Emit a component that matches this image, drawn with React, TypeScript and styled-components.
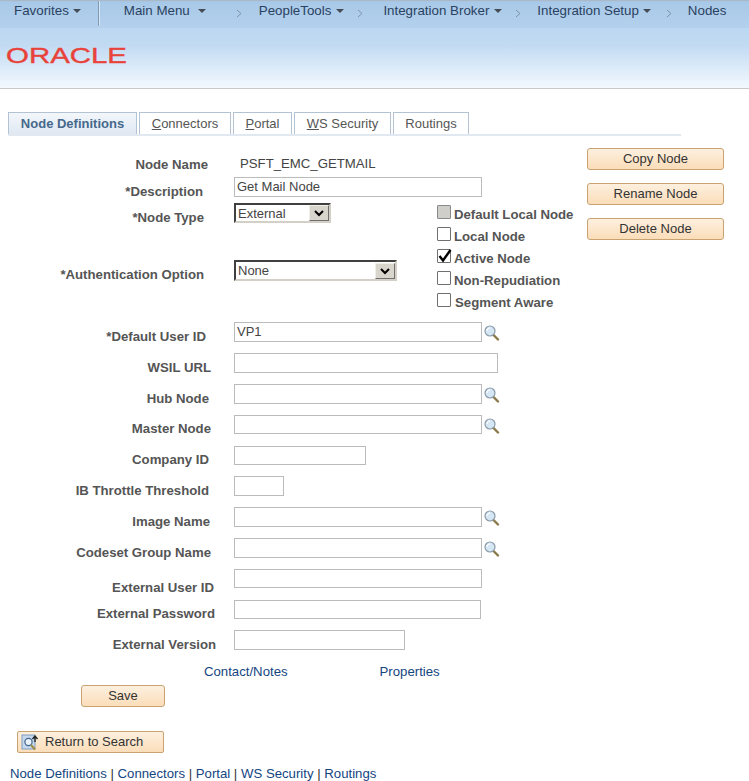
import styled, { createGlobalStyle } from 'styled-components'

const GlobalStyle = createGlobalStyle`
  html, body {
    margin: 0;
    padding: 0;
    background: #fff;
    overflow: hidden;
  }
  body {
    font-family: "Liberation Sans", Arial, sans-serif;
    font-size: 13.2px;
    color: #333;
  }
  * { box-sizing: border-box; }
`

const Page = styled.div`
  width: 749px;
  height: 781px;
  overflow: hidden;
`

const NavBar = styled.nav`
  height: 28px;
  display: flex;
  align-items: flex-start;
  padding-top: 1px;
  font-size: 13.33px;
  line-height: 17px;
  color: #2a4160;
  white-space: nowrap;
  background: linear-gradient(#a6c5e3 0, #a9c9e8 2px, #b3d1ed 100%);
  border-top: 1px solid #a9b9c9;
`

const NavLabel = styled.span<{ $left: number }>`
  margin-left: ${(p) => p.$left}px;
`

const NavMenu = styled.span<{ $left?: number }>`
  width: 0;
  height: 0;
  margin: 7px 0 0 ${(p) => p.$left ?? 4}px;
  border-left: 4px solid transparent;
  border-right: 4px solid transparent;
  border-top: 4px solid #454c55;
`

const NavDivider = styled.span`
  width: 2px;
  height: 25px;
  margin: -1px 0 0 17px;
  background: linear-gradient(90deg, #7e9cb8 50%, #d8e7f5 50%);
`

const NavChevron = styled.svg<{ $left: number }>`
  margin: 7px 0 0 ${(p) => p.$left}px;
  flex: none;
`

const Banner = styled.header`
  height: 61px;
  padding: 18px 0 0 6px;
  background: linear-gradient(#bcd7f1 0, #c2dbf3 30%, #f3f8fe 100%);
  border-bottom: 1px solid #c9c9c9;
`

const LogoMark = styled.svg`
  display: block;
`

const TabStrip = styled.div`
  width: 673px;
  height: 24px;
  margin: 23px 0 0 8px;
  display: flex;
  gap: 2px;
  border-bottom: 2px solid #e2e8f0;
`

const Tab = styled.div<{ $width: number; $active?: boolean }>`
  width: ${(p) => p.$width}px;
  height: 22px;
  text-align: center;
  line-height: 21px;
  border: 1px solid #b3c3d3;
  border-bottom: none;
  color: ${(p) => (p.$active ? '#45688c' : '#555')};
  font-size: 13px;
  font-weight: ${(p) => (p.$active ? 700 : 400)};
  background: ${(p) => (p.$active ? 'linear-gradient(#f3f7fb, #dfe8f2)' : '#fff')};
  u { text-underline-offset: 1px; }
`

const TopSection = styled.section`
  display: flex;
  margin-top: 12px;
`

const LeftColumn = styled.div`
  width: 437px;
  padding-top: 8px;
`

const FieldRow = styled.div<{ $gap?: number; $height?: number }>`
  display: grid;
  grid-template-columns: 234px 1fr;
  margin-top: ${(p) => p.$gap ?? 11}px;
  height: ${(p) => p.$height ?? 20}px;
`

const FieldLabel = styled.label<{ $right: number; $top?: number }>`
  text-align: right;
  padding-right: ${(p) => p.$right}px;
  padding-top: ${(p) => p.$top ?? 7}px;
  font-weight: 700;
  line-height: 15px;
  color: #555;
  white-space: nowrap;
`

const StaticValue = styled.span`
  padding-left: 6px;
  line-height: 16px;
  color: #444;
`

const InputCell = styled.div`
  display: flex;
  align-items: flex-start;
`

const TextInput = styled.input<{ $width: number; $height?: number }>`
  width: ${(p) => p.$width}px;
  height: ${(p) => p.$height ?? 20}px;
  padding: 0 0 2px 2px;
  border: 1px solid #bbb;
  background: #fff;
  font: 13px "Liberation Sans", Arial, sans-serif;
  color: #444;
  outline: none;
`

const LookupIcon = styled.svg`
  flex: none;
  margin: 2px 0 0 1px;
`

const SelectBox = styled.div<{ $width: number; $height: number }>`
  width: ${(p) => p.$width}px;
  height: ${(p) => p.$height}px;
  display: flex;
  align-items: center;
  justify-content: space-between;
  padding: 0 0 0 2px;
  border-top: 2px solid #404040;
  border-left: 2px solid #404040;
  border-right: 2px solid #d4d0c8;
  border-bottom: 2px solid #d4d0c8;
  font-size: 13px;
  color: #444;
  line-height: 15px;
`

const SelectArrow = styled.span`
  width: 20px;
  height: 16px;
  display: flex;
  align-items: center;
  justify-content: center;
  background: #d8d5cd;
  border: 1px solid;
  border-color: #efeee9 #6f6f6f #6f6f6f #efeee9;
`

const CheckColumn = styled.div`
  width: 150px;
  padding-top: 57px;
  display: flex;
  flex-direction: column;
  gap: 8px;
`

const CheckRow = styled.div<{ $gap?: number }>`
  height: 14px;
  display: flex;
  align-items: center;
  gap: ${(p) => p.$gap ?? 3}px;
  font-weight: 700;
  color: #555;
  white-space: nowrap;
`

const CheckText = styled.span`
  padding-top: 4px;
`

const CheckBox = styled.span<{ $disabled?: boolean }>`
  position: relative;
  width: 14px;
  height: 14px;
  flex: none;
  border: 1px solid ${(p) => (p.$disabled ? '#8a8a8a' : '#707070')};
  border-radius: 1px;
  background: ${(p) => (p.$disabled ? '#d0cec9' : '#fff')};
`

const CheckTick = styled.svg`
  position: absolute;
  left: 0;
  top: -1px;
`

const ButtonColumn = styled.div`
  width: 137px;
  display: flex;
  flex-direction: column;
  gap: 13px;
`

const ActionButton = styled.button<{ $width?: number }>`
  width: ${(p) => (p.$width ? `${p.$width}px` : '100%')};
  height: 22px;
  padding: 0 0 1px;
  border: 1px solid #c9a272;
  border-radius: 3px;
  background: linear-gradient(#fdf0df, #fbddb9);
  font: 13px "Liberation Sans", Arial, sans-serif;
  color: #333;
`

const FieldList = styled.section`
  margin-top: 15px;
`

const LinkRow = styled.div`
  display: flex;
  margin: 14px 0 0 204px;
  gap: 92px;
  line-height: 16px;
`

const PageLink = styled.a`
  color: #14457f;
  text-decoration: none;
`

const SaveWrap = styled.div`
  margin: 5px 0 0 81px;
`

const ReturnButton = styled.button`
  display: flex;
  align-items: center;
  gap: 4px;
  width: 147px;
  height: 22px;
  margin: 24px 0 0 17px;
  padding: 0 0 1px 3px;
  border: 1px solid #c9a272;
  border-radius: 2px;
  background: linear-gradient(#fdf0df, #fbddb9);
  font: 13px "Liberation Sans", Arial, sans-serif;
  color: #333;
`

const FooterLinks = styled.div`
  margin: 13px 0 0 10px;
  line-height: 16px;
  color: #333;
  white-space: pre;
`

function Lookup() {
  return (
    <LookupIcon width="17" height="17" viewBox="0 0 17 17">
      <path d="M10 10.5l5 5" stroke="#8a7a4a" strokeWidth="2.4" strokeLinecap="round" />
      <circle cx="7" cy="7" r="5" fill="#d5e6f5" stroke="#8b9aa8" strokeWidth="1.2" />
      <path d="M4 7a3 3 0 0 1 3-3" stroke="#fff" strokeWidth="1.2" fill="none" />
    </LookupIcon>
  )
}

function Chevron({ left }: { left: number }) {
  return (
    <NavChevron $left={left} width="6" height="9" viewBox="0 0 6 9">
      <path d="M1 1l4 3.5L1 8" stroke="#7d93aa" strokeWidth="1" fill="none" />
    </NavChevron>
  )
}

function SelectChevron() {
  return (
    <svg width="10" height="8" viewBox="0 0 10 8">
      <path d="M1 2l4 4 4-4" stroke="#000" strokeWidth="2" fill="none" />
    </svg>
  )
}

function ReturnIcon() {
  return (
    <svg width="20" height="18" viewBox="0 0 20 18" style={{ flex: 'none' }}>
      <rect x="1" y="2" width="13" height="14" fill="#c5d8ee" stroke="#7f9dc0" />
      <circle cx="7.5" cy="9" r="3.6" fill="#eaf3fb" stroke="#44668c" strokeWidth="1.2" />
      <path d="M10 12l4 4.5" stroke="#a08c40" strokeWidth="2" />
      <path d="M14 9V4M11.5 6L14 3l2.5 3" stroke="#222" strokeWidth="1.4" fill="none" />
    </svg>
  )
}

type Field = {
  label: string
  right: number
  top?: number
  gap?: number
  width: number
  height?: number
  lookup?: boolean
  value?: string
}

const fields: Field[] = [
  { label: '*Default User ID', right: 28, gap: 0, width: 248, lookup: true, value: 'VP1' },
  { label: 'WSIL URL', right: 23, width: 264 },
  { label: 'Hub Node', right: 25, width: 248, lookup: true },
  { label: 'Master Node', right: 23, top: 6, width: 248, height: 19, lookup: true },
  { label: 'Company ID', right: 25, top: 6, width: 132, height: 19 },
  { label: 'IB Throttle Threshold', right: 25, gap: 10, width: 50 },
  { label: 'Image Name', right: 24, width: 248, lookup: true },
  { label: 'Codeset Group Name', right: 23, width: 248, lookup: true },
  { label: 'External User ID', right: 20, top: 11, width: 248, height: 19 },
  { label: 'External Password', right: 19, top: 6, width: 247, height: 19 },
  { label: 'External Version', right: 18, gap: 10, width: 171 },
]

export default function App() {
  return (
    <Page>
      <GlobalStyle />
      <NavBar>
        <NavLabel $left={14}>Favorites</NavLabel>
        <NavMenu />
        <NavDivider />
        <NavLabel $left={24}>Main Menu</NavLabel>
        <NavMenu $left={8} />
        <Chevron left={30} />
        <NavLabel $left={17}>PeopleTools</NavLabel>
        <NavMenu $left={5} />
        <Chevron left={13} />
        <NavLabel $left={20}>Integration Broker</NavLabel>
        <NavMenu $left={5} />
        <Chevron left={13} />
        <NavLabel $left={16}>Integration Setup</NavLabel>
        <NavMenu $left={4} />
        <Chevron left={15} />
        <NavLabel $left={16}>Nodes</NavLabel>
      </NavBar>

      <Banner>
        <LogoMark width="140" height="26" viewBox="0 0 140 26">
          <text
            x="0"
            y="16.5"
            textLength="121"
            lengthAdjust="spacingAndGlyphs"
            fontFamily="Liberation Sans, Arial, sans-serif"
            fontSize="22"
            fill="#e8433a"
            stroke="#e8433a"
            strokeWidth="0.4"
          >
            ORACLE
          </text>
        </LogoMark>
      </Banner>

      <TabStrip>
        <Tab $width={129} $active>Node Definitions</Tab>
        <Tab $width={92}><u>C</u>onnectors</Tab>
        <Tab $width={59}><u>P</u>ortal</Tab>
        <Tab $width={97}><u>W</u>S Security</Tab>
        <Tab $width={76}>Routings</Tab>
      </TabStrip>

      <TopSection>
        <LeftColumn>
          <FieldRow $gap={0} $height={16}>
            <FieldLabel $right={26} $top={1}>Node Name</FieldLabel>
            <StaticValue>PSFT_EMC_GETMAIL</StaticValue>
          </FieldRow>
          <FieldRow $gap={5}>
            <FieldLabel $right={31}>*Description</FieldLabel>
            <InputCell><TextInput $width={248} defaultValue="Get Mail Node" readOnly /></InputCell>
          </FieldRow>
          <FieldRow $gap={6}>
            <FieldLabel $right={30}>*Node Type</FieldLabel>
            <InputCell>
              <SelectBox $width={97} $height={20}>
                External
                <SelectArrow><SelectChevron /></SelectArrow>
              </SelectBox>
            </InputCell>
          </FieldRow>
          <FieldRow $gap={37} $height={21}>
            <FieldLabel $right={30}>*Authentication Option</FieldLabel>
            <InputCell>
              <SelectBox $width={163} $height={21}>
                None
                <SelectArrow><SelectChevron /></SelectArrow>
              </SelectBox>
            </InputCell>
          </FieldRow>
        </LeftColumn>

        <CheckColumn>
          <CheckRow><CheckBox $disabled /><CheckText>Default Local Node</CheckText></CheckRow>
          <CheckRow><CheckBox /><CheckText>Local Node</CheckText></CheckRow>
          <CheckRow>
            <CheckBox>
              <CheckTick width="14" height="14" viewBox="0 0 14 14">
                <path d="M1.5 7l3.5 4.5L12.5 1" stroke="#000" strokeWidth="2.4" fill="none" />
              </CheckTick>
            </CheckBox>
            <CheckText>Active Node</CheckText>
          </CheckRow>
          <CheckRow><CheckBox /><CheckText>Non-Repudiation</CheckText></CheckRow>
          <CheckRow $gap={4}><CheckBox /><CheckText>Segment Aware</CheckText></CheckRow>
        </CheckColumn>

        <ButtonColumn>
          <ActionButton>Copy Node</ActionButton>
          <ActionButton>Rename Node</ActionButton>
          <ActionButton>Delete Node</ActionButton>
        </ButtonColumn>
      </TopSection>

      <FieldList>
        {fields.map((f) => (
          <FieldRow key={f.label} $gap={f.gap}>
            <FieldLabel $right={f.right} $top={f.top}>{f.label}</FieldLabel>
            <InputCell>
              <TextInput $width={f.width} $height={f.height} defaultValue={f.value} readOnly />
              {f.lookup && <Lookup />}
            </InputCell>
          </FieldRow>
        ))}
      </FieldList>

      <LinkRow>
        <PageLink href="#">Contact/Notes</PageLink>
        <PageLink href="#">Properties</PageLink>
      </LinkRow>

      <SaveWrap>
        <ActionButton $width={84}>Save</ActionButton>
      </SaveWrap>

      <ReturnButton>
        <ReturnIcon />
        Return to Search
      </ReturnButton>

      <FooterLinks>
        <PageLink href="#">Node Definitions</PageLink> | <PageLink href="#">Connectors</PageLink> | <PageLink href="#">Portal</PageLink> | <PageLink href="#">WS Security</PageLink> | <PageLink href="#">Routings</PageLink>
      </FooterLinks>
    </Page>
  )
}
